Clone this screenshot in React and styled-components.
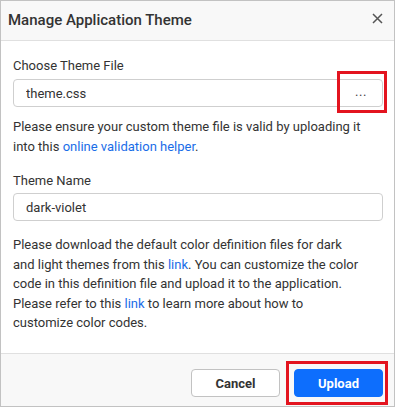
import React from "react";
import styled, { createGlobalStyle } from "styled-components";

const GlobalStyle = createGlobalStyle`
  html, body {
    margin: 0;
    padding: 0;
    background: #fff;
  }
  * {
    box-sizing: border-box;
  }
`;

const Dialog = styled.div`
  width: 395px;
  height: 407px;
  border: 1px solid #c2c2c2;
  background: #fff;
  display: flex;
  flex-direction: column;
  font-family: Roboto, "Liberation Sans", sans-serif;
  color: #333;
`;

const Header = styled.div`
  height: 40px;
  flex-shrink: 0;
  background: #f8f8f8;
  border-bottom: 1px solid #e0e0e0;
  display: flex;
  align-items: center;
  justify-content: space-between;
  padding: 0 9px 4px 7px;
`;

const Title = styled.h2`
  margin: 0;
  font-size: 15px;
  font-weight: 500;
  color: #333;
  padding-top: 2px;
`;

const CloseButton = styled.button`
  border: none;
  background: none;
  padding: 0;
  width: 16px;
  height: 16px;
  display: flex;
  align-items: center;
  justify-content: center;
  cursor: pointer;
  color: #555;
`;

const Body = styled.div`
  flex: 1;
  padding: 15px 11px 0 12px;
  display: flex;
  flex-direction: column;
  font-size: 13px;
`;

const Label = styled.label`
  display: block;
  line-height: 20px;
  margin-top: ${(p) => p.$top || 0}px;
  color: #333;
`;

const InputWrap = styled.div`
  position: relative;
  margin-top: ${(p) => p.$top || 3}px;
  height: 28px;
  border: 1px solid #cfcfcf;
  border-radius: 4px;
  display: flex;
  align-items: center;
  background: #fff;
`;

const TextInput = styled.input`
  flex: 1;
  min-width: 0;
  height: 100%;
  border: none;
  outline: none;
  background: transparent;
  padding: 0 12px;
  font-family: inherit;
  font-size: 13px;
  color: #333;
`;

const BrowseButton = styled.button`
  width: 42px;
  height: 100%;
  border: none;
  background: transparent;
  display: flex;
  align-items: center;
  justify-content: center;
  font-family: inherit;
  font-size: 13px;
  color: #444;
  letter-spacing: 0.5px;
  cursor: pointer;
  padding: 0 0 4px;
`;

const Highlight = styled.span`
  position: absolute;
  top: ${(p) => p.$top}px;
  right: ${(p) => p.$right}px;
  bottom: ${(p) => p.$bottom}px;
  left: ${(p) => p.$left}px;
  border: 3px solid #e3141f;
  pointer-events: none;
`;

const Paragraph = styled.p`
  margin: ${(p) => p.$top || 0}px 0 0;
  line-height: 19.5px;
  color: #333;
`;

const Link = styled.a`
  color: #1a6de8;
  text-decoration: none;
`;

const Footer = styled.div`
  height: 53px;
  flex-shrink: 0;
  background: #f8f8f8;
  border-top: 1px solid #e0e0e0;
  display: flex;
  justify-content: flex-end;
  align-items: flex-start;
  gap: 14px;
  padding: 15px 11px 0 0;
`;

const ButtonWrap = styled.div`
  position: relative;
`;

const Button = styled.button`
  width: ${(p) => p.$width}px;
  height: 28px;
  border-radius: 4px;
  font-family: inherit;
  font-size: 13px;
  font-weight: 700;
  cursor: pointer;
  border: 1px solid ${(p) => (p.$primary ? "#0d6efd" : "#c2c2c2")};
  background: ${(p) => (p.$primary ? "#0d6efd" : "#fff")};
  color: ${(p) => (p.$primary ? "#fff" : "#333")};
`;

export default function App() {
  return (
    <>
      <GlobalStyle />
      <Dialog>
        <Header>
          <Title>Manage Application Theme</Title>
          <CloseButton aria-label="Close">
            <svg width="11" height="11" viewBox="0 0 11 11">
              <path
                d="M1 1 L10 10 M10 1 L1 10"
                stroke="currentColor"
                strokeWidth="1.5"
                fill="none"
              />
            </svg>
          </CloseButton>
        </Header>
        <Body>
          <Label>Choose Theme File</Label>
          <InputWrap>
            <TextInput defaultValue="theme.css" readOnly />
            <BrowseButton>...</BrowseButton>
            <Highlight $top={-9} $right={-5} $bottom={-7} $left={323} />
          </InputWrap>
          <Paragraph $top={10}>
            Please ensure your custom theme file is valid by uploading it
            into this <Link href="#">online validation helper</Link>.
          </Paragraph>
          <Label $top={15}>Theme Name</Label>
          <InputWrap $top={2}>
            <TextInput defaultValue="dark-violet" />
          </InputWrap>
          <Paragraph $top={14}>
            Please download the default color definition files for dark
            <br />
            and light themes from this <Link href="#">link</Link>. You can
            customize the color
            <br />
            code in this definition file and upload it to the application.
            <br />
            Please refer to this <Link href="#">link</Link> to learn more
            about how to
            <br />
            customize color codes.
          </Paragraph>
        </Body>
        <Footer>
          <Button $width={89}>Cancel</Button>
          <ButtonWrap>
            <Button $primary $width={89}>Upload</Button>
            <Highlight $top={-8} $right={-5} $bottom={-8} $left={-8} />
          </ButtonWrap>
        </Footer>
      </Dialog>
    </>
  );
}
